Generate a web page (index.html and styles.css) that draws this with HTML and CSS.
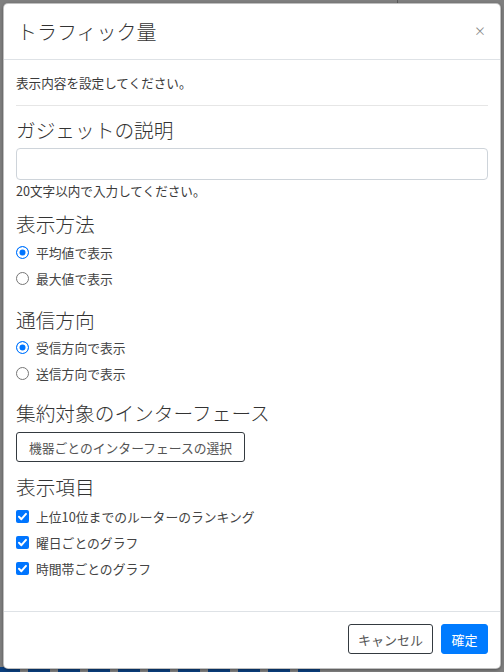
FILE: index.html
```html
<!DOCTYPE html>
<html lang="ja">
<head>
<meta charset="utf-8">
<title>トラフィック量</title>
<link rel="stylesheet" href="styles.css">
</head>
<body>
<div class="backdrop">
  <div class="bg-line"></div>
  <div class="strip">
    <span class="blk first"></span><span class="blk"></span><span class="blk"></span><span class="blk"></span><span class="blk"></span><span class="blk"></span><span class="blk"></span><span class="blk"></span><span class="blk"></span><span class="blk"></span><span class="blk"></span>
  </div>
</div>
<div class="modal">
  <div class="modal-header">
    <h5 class="modal-title">トラフィック量</h5>
    <span class="close">×</span>
  </div>
  <div class="modal-body">
    <p class="intro">表示内容を設定してください。</p>
    <hr class="sep">
    <h6 class="sec sec-first">ガジェットの説明</h6>
    <input class="text-input" type="text">
    <p class="help">20文字以内で入力してください。</p>

    <h6 class="sec">表示方法</h6>
    <label class="opt first-opt"><span class="radio on"></span>平均値で表示</label>
    <label class="opt"><span class="radio"></span>最大値で表示</label>

    <h6 class="sec sec-gap">通信方向</h6>
    <label class="opt first-opt2"><span class="radio on"></span>受信方向で表示</label>
    <label class="opt"><span class="radio"></span>送信方向で表示</label>

    <h6 class="sec sec-gap2">集約対象のインターフェース</h6>
    <button class="btn-select" type="button">機器ごとのインターフェースの選択</button>

    <h6 class="sec sec-gap3">表示項目</h6>
    <label class="opt first-opt3"><span class="check"><svg viewBox="0 0 13 13" width="13" height="13"><path d="M3 6.8 L5.4 9.2 L10 3.9" fill="none" stroke="#fff" stroke-width="2" stroke-linecap="round" stroke-linejoin="round"/></svg></span>上位10位までのルーターのランキング</label>
    <label class="opt"><span class="check"><svg viewBox="0 0 13 13" width="13" height="13"><path d="M3 6.8 L5.4 9.2 L10 3.9" fill="none" stroke="#fff" stroke-width="2" stroke-linecap="round" stroke-linejoin="round"/></svg></span>曜日ごとのグラフ</label>
    <label class="opt"><span class="check"><svg viewBox="0 0 13 13" width="13" height="13"><path d="M3 6.8 L5.4 9.2 L10 3.9" fill="none" stroke="#fff" stroke-width="2" stroke-linecap="round" stroke-linejoin="round"/></svg></span>時間帯ごとのグラフ</label>
  </div>
  <div class="modal-footer">
    <button class="btn btn-cancel" type="button">キャンセル</button>
    <button class="btn btn-ok" type="button">確定</button>
  </div>
</div>
</body>
</html>
```

FILE: styles.css
```css
* { box-sizing: border-box; }
html, body { margin: 0; padding: 0; }
body {
  width: 504px;
  height: 672px;
  overflow: hidden;
  font-family: "Noto Sans CJK JP", "Noto Sans", sans-serif;
  color: #333;
  position: relative;
}
.backdrop {
  width: 504px;
  height: 672px;
  background: #7f7f7f;
  display: flex;
  flex-direction: column;
  position: relative;
}
.bg-line {
  position: absolute;
  left: 397px;
  top: 0;
  width: 1px;
  height: 4px;
  background: #5a5a5a;
}
.strip {
  margin-top: auto;
  height: 5px;
  display: flex;
  gap: 8px;
}
.blk { width: 22px; background: #0b3f7e; }
.blk.first { width: 20px; }

.modal {
  position: absolute;
  left: 3px;
  top: 3px;
  width: 498px;
  height: 666px;
  background: #fff;
  border: 1px solid rgba(0,0,0,.25);
  border-radius: 5px;
  box-shadow: 0 1px 3px rgba(0,0,0,.35);
  display: flex;
  flex-direction: column;
}
.modal-header {
  height: 56px;
  padding: 0 14px 0 13px;
  border-bottom: 1px solid #dee2e6;
  display: flex;
  align-items: center;
  justify-content: space-between;
  flex-shrink: 0;
}
.modal-title {
  margin: 0;
  font-size: 20px;
  font-weight: 300;
  line-height: 24px;
  color: #333;
}
.close {
  font-size: 12px;
  line-height: 12px;
  color: #8a8a8a;
  margin-top: -2px;
}
.modal-body {
  flex: 1;
  padding: 13px 12px 0 12px;
}
.intro {
  margin: 0;
  font-size: 12.6px;
  line-height: 20px;
  color: #3a3a3a;
}
.sep {
  margin: 12px 0 0 0;
  border: 0;
  border-top: 1px solid #e6e6e6;
  height: 0;
}
.sec {
  margin: 12px 0 0 0;
  font-size: 19.7px;
  font-weight: 300;
  line-height: 24px;
  color: #333;
}
.sec-first { margin-top: 12px; }
.text-input {
  display: block;
  margin-top: 6px;
  width: 472px;
  height: 32px;
  border: 1px solid #ced4da;
  border-radius: 4px;
  background: #fff;
  font: inherit;
}
.help {
  margin: 2px 0 0 0;
  font-size: 12.6px;
  line-height: 18px;
  color: #3a3a3a;
}
.opt {
  display: flex;
  align-items: center;
  height: 20px;
  margin-top: 6px;
  font-size: 12.8px;
  color: #444;
}
.first-opt { margin-top: 6px; }
.first-opt2 { margin-top: 5px; }
.first-opt3 { margin-top: 7px; }
.sec-gap { margin-top: 20px; }
.sec-gap2 { margin-top: 18px; }
.sec-gap3 { margin-top: 13px; }
.radio {
  width: 13px;
  height: 13px;
  border-radius: 50%;
  border: 1px solid #767676;
  background: #fff;
  margin-right: 7px;
  flex-shrink: 0;
}
.radio.on {
  border-color: #0075ff;
  background: #0075ff;
  box-shadow: inset 0 0 0 2.5px #fff;
}
.check {
  width: 13px;
  height: 13px;
  border-radius: 2px;
  background: #0075ff;
  margin-right: 7px;
  flex-shrink: 0;
  display: flex;
}
.btn-select {
  display: block;
  margin-top: 7px;
  height: 30px;
  padding: 0 10px;
  width: 229px;
  background: #fff;
  border: 1px solid #343a40;
  border-radius: 3px;
  font-family: inherit;
  font-size: 12.8px;
  color: #555;
  white-space: nowrap;
}
.modal-footer {
  flex-shrink: 0;
  height: 57px;
  border-top: 1px solid #dee2e6;
  display: flex;
  justify-content: flex-end;
  align-items: flex-start;
  gap: 8px;
  padding: 12px 12px 0 0;
}
.btn {
  height: 30px;
  border-radius: 3px;
  font-family: inherit;
  font-size: 13px;
  padding: 0 9px;
  white-space: nowrap;
}
.btn-cancel {
  width: 85px;
  background: #fff;
  border: 1px solid #343a40;
  color: #555;
}
.btn-ok {
  width: 47px;
  background: #007bff;
  border: 1px solid #007bff;
  color: #fff;
}
```
